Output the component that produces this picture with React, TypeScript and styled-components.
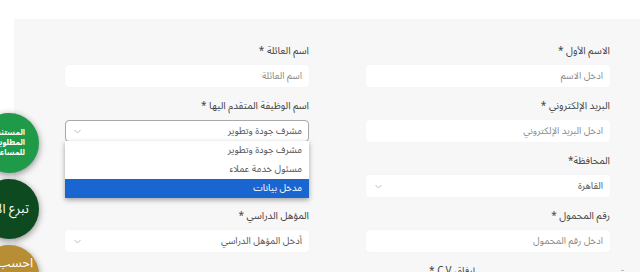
import React from "react";
import styled, { createGlobalStyle } from "styled-components";

const GlobalStyle = createGlobalStyle`
  html, body {
    margin: 0;
    padding: 0;
    background: #ffffff;
    overflow: hidden;
  }
  body {
    width: 640px;
    height: 272px;
    font-family: "Noto Sans Arabic", "DejaVu Sans", sans-serif;
  }
`;

const Page = styled.div`
  width: 640px;
  height: 272px;
  padding: 19px 0 0 14px;
  box-sizing: border-box;
  overflow: hidden;
  position: relative;
`;

const Panel = styled.div`
  background: #f7f7f7;
  height: 100%;
  box-sizing: border-box;
  padding: 25px 30px 0 51px;
`;

const Form = styled.form`
  direction: rtl;
  display: grid;
  grid-template-columns: 244px 244px;
  column-gap: 57px;
  row-gap: 12px;
`;

const Field = styled.div<{ $indent?: number }>`
  display: flex;
  flex-direction: column;
  position: relative;
  padding-right: ${(p) => p.$indent ?? 0}px;
`;

const Label = styled.label`
  font-size: 10px;
  line-height: 14px;
  color: #444;
  margin-bottom: 7px;
  white-space: nowrap;
`;

const TextBox = styled.div`
  height: 22px;
  box-sizing: border-box;
  background: #ffffff;
  border-radius: 4px;
  box-shadow: 0 0 2px rgba(0, 0, 0, 0.04);
  display: flex;
  align-items: center;
  justify-content: space-between;
  padding: 0 7px 0 9px;
  font-size: 9.5px;
  color: #8a8a8a;
`;

const SelectBox = styled(TextBox)<{ $open?: boolean }>`
  color: #555;
  border: ${(p) => (p.$open ? "1px solid #a9a9a9" : "none")};
  padding-right: ${(p) => (p.$open ? 6 : 7)}px;
  padding-left: ${(p) => (p.$open ? 8 : 9)}px;
`;

const Chevron = () => (
  <svg width="7" height="5" viewBox="0 0 7 5">
    <path d="M0.5 1 L3.5 4 L6.5 1" fill="none" stroke="#b5b5b5" strokeWidth="0.9" />
  </svg>
);

const List = styled.ul`
  position: absolute;
  top: 42px;
  right: 0;
  left: 0;
  margin: 0;
  padding: 0;
  list-style: none;
  background: #ffffff;
  box-shadow: 0 2px 5px rgba(0, 0, 0, 0.35);
  z-index: 2;
`;

const Option = styled.li<{ $active?: boolean }>`
  height: 19px;
  line-height: 19px;
  padding: 0 7px;
  font-size: 9.5px;
  color: ${(p) => (p.$active ? "#ffffff" : "#555")};
  background: ${(p) => (p.$active ? "#1a66d0" : "transparent")};
`;

const Floaters = styled.div`
  position: absolute;
  left: -21px;
  top: 113px;
  display: flex;
  flex-direction: column;
  gap: 6px;
  z-index: 3;
`;

const Circle = styled.div<{ $bg: string; $top?: boolean }>`
  width: 60px;
  height: 60px;
  border-radius: 50%;
  background: ${(p) => p.$bg};
  box-shadow: 0 2px 7px rgba(0, 0, 0, 0.45);
  color: #ffffff;
  direction: rtl;
  display: flex;
  flex-direction: column;
  justify-content: ${(p) => (p.$top ? "flex-start" : "center")};
  padding-top: ${(p) => (p.$top ? 11 : 0)}px;
  align-items: flex-start;
  box-sizing: border-box;
  overflow: hidden;
`;

const SmallText = styled.div`
  font-size: 8px;
  font-weight: bold;
  line-height: 10px;
  margin-right: 14px;
  white-space: nowrap;
`;

const BigText = styled.div<{ $inset: number }>`
  font-size: 13px;
  line-height: 14px;
  margin-right: ${(p) => p.$inset}px;
  white-space: nowrap;
`;

const Tick = styled.div`
  position: absolute;
  right: 16px;
  bottom: 1px;
  width: 3px;
  height: 1px;
  background: #bbb;
`;

export default function App() {
  return (
    <>
      <GlobalStyle />
      <Page>
        <Panel>
          <Form>
            <Field>
              <Label>الاسم الأول *</Label>
              <TextBox>ادخل الاسم</TextBox>
            </Field>
            <Field>
              <Label>اسم العائلة *</Label>
              <TextBox>اسم العائلة</TextBox>
            </Field>
            <Field>
              <Label>البريد الإلكتروني *</Label>
              <TextBox>ادخل البريد الإلكتروني</TextBox>
            </Field>
            <Field>
              <Label>اسم الوظيفة المتقدم اليها *</Label>
              <SelectBox $open>
                <span>مشرف جودة وتطوير</span>
                <Chevron />
              </SelectBox>
              <List>
                <Option>مشرف جودة وتطوير</Option>
                <Option>مسئول خدمة عملاء</Option>
                <Option $active>مدخل بيانات</Option>
              </List>
            </Field>
            <Field>
              <Label>المحافظة*</Label>
              <SelectBox>
                <span>القاهرة</span>
                <Chevron />
              </SelectBox>
            </Field>
            <Field />
            <Field>
              <Label>رقم المحمول *</Label>
              <TextBox>ادخل رقم المحمول</TextBox>
            </Field>
            <Field>
              <Label>المؤهل الدراسي *</Label>
              <SelectBox>
                <span>أدخل المؤهل الدراسي</span>
                <Chevron />
              </SelectBox>
            </Field>
            <Field $indent={135}>
              <Label>إرفاق C.V *</Label>
            </Field>
          </Form>
        </Panel>
        <Tick />
        <Floaters>
          <Circle $bg="#1f9a48">
            <SmallText>المستندات</SmallText>
            <SmallText>المطلوبة</SmallText>
            <SmallText>للمساعدة</SmallText>
          </Circle>
          <Circle $bg="#0d4a20">
            <BigText $inset={10}>تبرع الآن</BigText>
          </Circle>
          <Circle $bg="#b78e34" $top>
            <BigText $inset={6}>احسب</BigText>
            <BigText $inset={6}>زكاتك</BigText>
          </Circle>
        </Floaters>
      </Page>
    </>
  );
}
